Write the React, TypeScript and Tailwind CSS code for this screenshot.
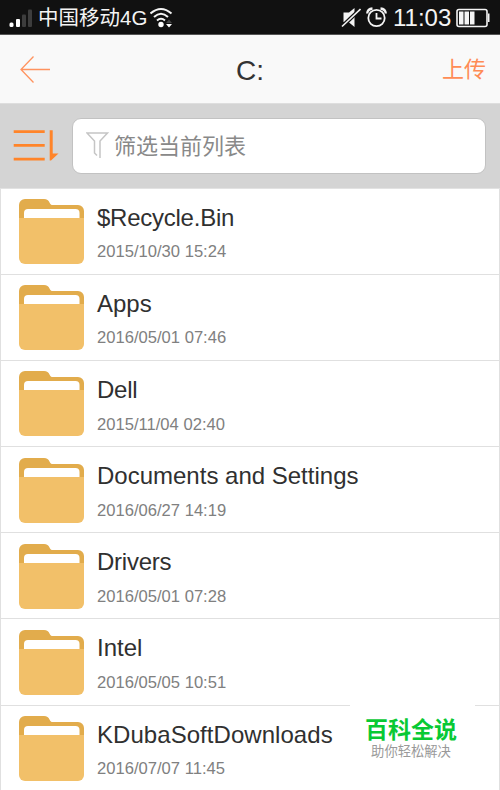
const files = [
  { name: '$Recycle.Bin', date: '2015/10/30 15:24', spacing: 'tracking-[-0.25px]' },
  { name: 'Apps', date: '2016/05/01 07:46', spacing: 'tracking-normal' },
  { name: 'Dell', date: '2015/11/04 02:40', spacing: 'tracking-[-0.25px]' },
  { name: 'Documents and Settings', date: '2016/06/27 14:19', spacing: 'tracking-normal' },
  { name: 'Drivers', date: '2016/05/01 07:28', spacing: 'tracking-[-0.25px]' },
  { name: 'Intel', date: '2016/05/05 10:51', spacing: 'tracking-normal' },
  { name: 'KDubaSoftDownloads', date: '2016/07/07 11:45', spacing: 'tracking-[0.05px]' },
];

function FolderIcon() {
  return (
    <svg className="mt-[10.5px] h-[65px] w-[65px] shrink-0" viewBox="0 0 65 65">
      <path d="M0 22V6a6 6 0 0 1 6-6h19c3 0 4.500 1.500 5.500 3.500S32 6 34 6h25a6 6 0 0 1 6 6v10z" fill="#e2ac4c" />
      <path d="M5 24V14a4 4 0 0 1 4-4h47.500a4 4 0 0 1 4 4v10z" fill="#fff" />
      <path d="M0 19h65v40a6 6 0 0 1-6 6H6a6 6 0 0 1-6-6z" fill="#f2c069" />
    </svg>
  );
}

function StatusBar() {
  return (
    <div className="flex h-[35px] items-center border-b border-[#555] bg-[#111] text-[#f4f4f4]">
      <svg className="ml-[9px] h-[35px] w-[24px]" viewBox="0 0 24 35">
        <rect x=".5" y="22.500" width="4" height="4.500" rx="1.500" fill="#fff" />
        <rect x="7" y="19" width="4" height="8" rx="1" fill="#fff" />
        <rect x="13" y="14.500" width="4" height="12.500" rx="1" fill="#3d3d3d" />
        <rect x="19" y="9.500" width="4" height="17.500" rx="1" fill="#3d3d3d" />
      </svg>
      <span className="ml-[5px] text-[20.5px] leading-[35px] whitespace-nowrap">中国移动4G</span>
      <svg className="ml-[3px] h-[35px] w-[24px]" viewBox="0 0 24 35" fill="none" stroke="#f4f4f4" strokeWidth="2">
        <path d="M.5 13.500Q11 4.500 21.500 13.500M4 17Q11 10.500 18 17M7 20.500Q11 17 15 20.500" />
        <circle cx="11" cy="24.500" r="2.700" fill="#fff" stroke="none" />
        <path d="M16 23l3-3.500 3 3.500z" fill="#444" stroke="none" />
        <path d="M16 24h6l-3 3.500z" fill="#fff" stroke="none" />
      </svg>
      <svg className="ml-auto h-[35px] w-[20px]" viewBox="0 0 20 35">
        <path d="M2.500 12.500h5.500l5.500-4.500v19l-6-5h-5z" fill="#f4f4f4" />
        <path d="M1 26.500L19.500 9" stroke="#111" strokeWidth="4" />
        <path d="M1 26.500L19.500 9" stroke="#f4f4f4" strokeWidth="1.600" />
      </svg>
      <svg className="ml-[5px] h-[35px] w-[21px]" viewBox="0 0 21 35" fill="none" stroke="#f4f4f4">
        <circle cx="10.500" cy="18" r="8.200" strokeWidth="1.800" />
        <path d="M10.500 13v5.500h5" strokeWidth="1.800" />
        <path d="M1.200 13.500Q1.500 9 6.500 8.500M19.800 13.500Q19.500 9 14.500 8.500" strokeWidth="2.300" />
      </svg>
      <span className="ml-[6px] w-[59px] text-[24px] leading-[35px]">11:03</span>
      <svg className="mr-[10px] ml-[4px] h-[35px] w-[34px]" viewBox="0 0 34 35">
        <rect x="1" y="9.500" width="30" height="17" rx="2" fill="none" stroke="#f4f4f4" strokeWidth="1.600" />
        <path d="M32 13.500h1.500v8.500H32z" fill="#f4f4f4" />
        <path d="M3 11.500h4.500v13H3zM8.500 11.500h4.500v13H8.500zM14 11.500h4.500v13H14z" fill="#f4f4f4" />
      </svg>
    </div>
  );
}

export default function App() {
  return (
    <div className="relative h-[790px] w-[500px] overflow-hidden bg-white font-['Liberation_Sans','Noto_Sans_CJK_SC',sans-serif]">
      <StatusBar />

      <header className="grid h-[69px] grid-cols-3 items-center border-b border-[#dedede] bg-[#f9f9f9]">
        <svg className="ml-[20px] h-[28px] w-[31px]" viewBox="0 0 31 28" fill="none" stroke="#ff935f" strokeWidth="1.300">
          <path d="M30 14.500H1M13.500 1.500L1 14.500l12.500 13" />
        </svg>
        <h1 className="pt-[3px] text-center text-[28px] leading-[40px] text-[#333]">C:</h1>
        <button className="mr-[14px] justify-self-end pt-[2px] text-[22px] leading-[32px] text-[#ff8c55]">上传</button>
      </header>

      <div className="flex h-[84.6px] items-center border-b border-[#e2e2e2] bg-[#d4d4d4] pr-[14px] pl-[13px]">
        <svg className="h-[32px] w-[46px] shrink-0" viewBox="0 0 46 32" fill="#ff8429">
          <path d="M.7 .2h31v2.700H.7zM.7 14h31v2.700H.7zM.7 27.800h31v2.700H.7zM36.700 .2h3v23.300h5.800L38 30.500h-1.300z" />
        </svg>
        <label className="ml-[13px] flex h-[56px] flex-1 items-center rounded-[9px] border border-[#c2c2c2] bg-white">
          <svg className="ml-[13px] h-[28px] w-[24px]" viewBox="0 0 24 28" fill="none" stroke="#c5c5c5" strokeWidth="1.500">
            <path d="M14 26V9L21.500 1H1l7.500 8v12l2.500 2.500" />
          </svg>
          <span className="ml-[4px] pt-[2px] text-[22px] leading-[32px] text-[#898989]">筛选当前列表</span>
        </label>
      </div>

      <ul className="border-x border-[#e0e0e0]">
        {files.map((file) => (
          <li key={file.name} className="flex h-[86.17px] border-b border-[#e0e0e0] pl-[17.5px]">
            <FolderIcon />
            <div className="ml-[13.5px] pt-[14px]">
              <div className={`text-[24px] leading-[30px] whitespace-nowrap text-[#303030] ${file.spacing}`}>{file.name}</div>
              <div className="mt-[9.7px] text-[16.6px] leading-[20px] text-[#808080]">{file.date}</div>
            </div>
          </li>
        ))}
      </ul>

      <div className="absolute top-[705px] left-[350px] flex h-[85px] w-[125px] flex-col items-center bg-white">
        <div className="mt-[9px] mr-[3px] text-[23px] leading-[32px] font-bold whitespace-nowrap text-[#08c934]">百科全说</div>
        <div className="-mt-[4px] mr-[3px] text-[13.3px] leading-[20px] whitespace-nowrap text-[#999]">助你轻松解决</div>
      </div>
    </div>
  );
}
